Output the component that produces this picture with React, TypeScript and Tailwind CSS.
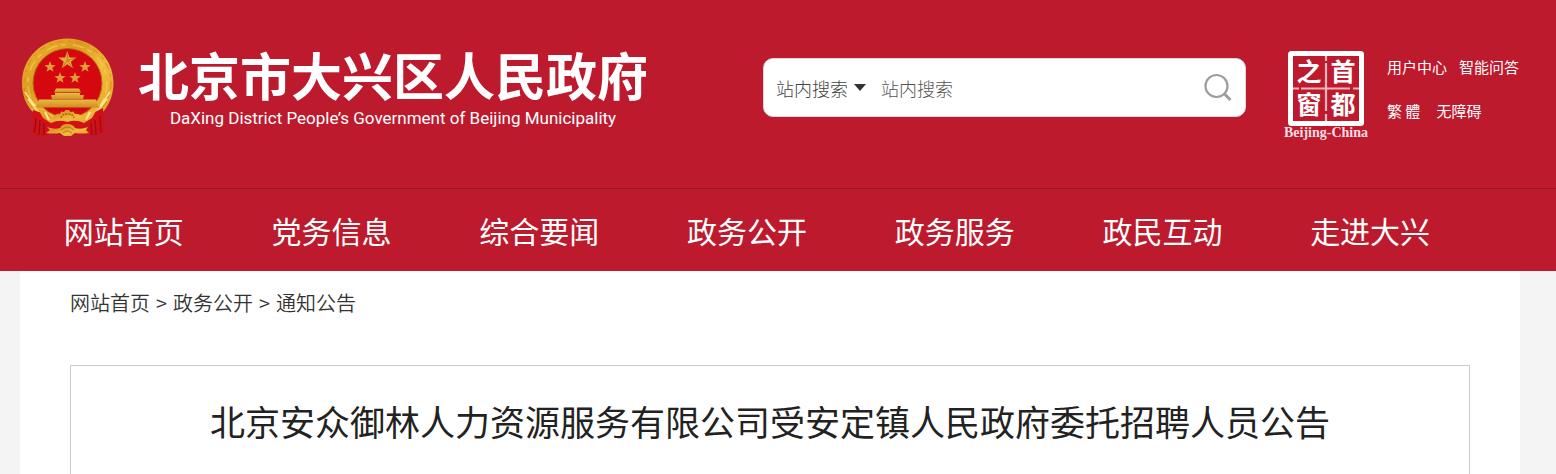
import { useState } from "react";

const NAV_ITEMS = [
  "网站首页",
  "党务信息",
  "综合要闻",
  "政务公开",
  "政务服务",
  "政民互动",
  "走进大兴",
];

const BREADCRUMBS = ["网站首页", "政务公开", "通知公告"];

const SMALL_STARS = [
  { x: 28, y: 29 },
  { x: 63, y: 29 },
  { x: 38, y: 40 },
  { x: 53, y: 40 },
];

function starPoints(cx: number, cy: number, r: number): string {
  const points: string[] = [];
  for (let i = 0; i < 10; i++) {
    const radius = i % 2 === 0 ? r : r * 0.4;
    const angle = (Math.PI / 5) * i - Math.PI / 2;
    points.push(
      `${(cx + radius * Math.cos(angle)).toFixed(2)},${(cy + radius * Math.sin(angle)).toFixed(2)}`,
    );
  }
  return points.join(" ");
}

function Emblem() {
  return (
    <svg viewBox="0 0 92 100" className="h-[100px] w-[92px] shrink-0" aria-hidden="true">
      <defs>
        <linearGradient id="gold" x1="0" y1="0" x2="1" y2="1">
          <stop offset="0" stopColor="#efb42e" />
          <stop offset="0.35" stopColor="#de9a22" />
          <stop offset="0.6" stopColor="#f0bb3c" />
          <stop offset="1" stopColor="#e3a026" />
        </linearGradient>
        <linearGradient id="gate" x1="0" y1="0" x2="0" y2="1">
          <stop offset="0" stopColor="#ecba44" />
          <stop offset="1" stopColor="#cf8c22" />
        </linearGradient>
      </defs>

      {/* wreath */}
      <path
        d="M45.5 0.5 C71 0.5 91.5 20 91.5 45 C91.5 57 87 68 80 75 L73 82 L60 86 H32 L18 82 L12 75 C4 68 0 57 0 45 C0 20 20 0.5 45.5 0.5 Z"
        fill="url(#gold)"
      />
      <ellipse
        cx="45.5"
        cy="45"
        rx="43.5"
        ry="42"
        fill="none"
        stroke="#cf8e1d"
        strokeWidth="1"
        strokeDasharray="7 5 3 4"
      />
      <ellipse
        cx="45.5"
        cy="45"
        rx="39.5"
        ry="38.5"
        fill="none"
        stroke="#f9d65d"
        strokeWidth="1.6"
        strokeDasharray="11 4 5 7"
        opacity="0.55"
      />
      <path
        d="M3 54 L13 68 M6 61 L18 76 M88 54 L78 68 M85 61 L73 76"
        stroke="#fbe694"
        strokeWidth="1.4"
      />
      <circle cx="45.5" cy="45" r="34.5" fill="#d6080f" stroke="#b56d16" strokeWidth="1" />

      {/* stars */}
      <polygon points={starPoints(45.3, 22.5, 9.5)} fill="#e5ac3c" />
      <path d="M45.3 13 V22.5 L54 20 M45.3 22.5 L51 30 M45.3 22.5 L40 30" stroke="#b46f1c" strokeWidth="0.8" fill="none" />
      {SMALL_STARS.map((star) => (
        <polygon key={`${star.x}-${star.y}`} points={starPoints(star.x, star.y, 6)} fill="#dfa03a" />
      ))}

      {/* gate */}
      <path d="M34 50.5 H57 L59 54.5 H32 Z" fill="url(#gate)" />
      <path d="M33 55 H58 V57 H62 L61 61.5 H30 L29 57 H33 Z" fill="url(#gate)" />
      <path d="M17 61.5 H74 L77 69.5 H14 Z" fill="url(#gate)" />
      <path d="M30 61.5 H61" stroke="#b9741d" strokeWidth="0.5" />

      {/* drapes */}
      <path
        d="M11 72 L20 75 L24 81 L36 83 L45.5 80 L55 83 L67 81 L71 75 L81 70 L82 94 Q76 98 70 97 L64 95 L45 98 L27 95 L22 98 Q17 99 10 96 Z"
        fill="#d30f17"
      />
      <path
        d="M14 80 L12.5 95 M18 82 L17 97 M22 85 V97 M69 85 L70 97 M73 82 L74 97 M78 78 L79 95"
        stroke="#8f1219"
        strokeWidth="1.4"
        fill="none"
      />
      <path
        d="M16 71 L24 73 L30 80 Q34 75 38 76 L39 73.5 L42 74 L43.5 72 H47 L48.5 74 L51.5 73.5 L53 76 Q57 75 61 80 L67 73 L75 71 L70 80 L62 85 Q54 81 45.5 84 Q37 81 29 85 L21 80 Z"
        fill="url(#gold)"
      />
      <path d="M23 74 L27 82 M68 74 L64 82" stroke="#fbe694" strokeWidth="2" />
      <path d="M39 80 Q40 76 45.3 76 Q51 76 52 80" fill="none" stroke="#a8641a" strokeWidth="1.4" strokeDasharray="2 1" />
      <path
        d="M25 89 Q32 92 38 90 Q40 86 45.5 86 Q51 86 53 90 Q59 92 66 89 L64 92 L67 95 Q59 96 53 95 L49 98 H42 L38 95 Q31 96 24 95 L28 92 Z"
        fill="url(#gold)"
      />
      <path d="M39 92 Q45.5 86 52 92 M41 95 Q45.5 91 50 95" stroke="#b9741d" strokeWidth="1" fill="none" />
    </svg>
  );
}

function CapitalWindowSeal() {
  return (
    <a href="#capital" className="flex w-[84px] shrink-0 flex-col items-center text-white">
      <svg viewBox="0 0 76 75" className="h-[75px] w-[76px]" aria-label="首都之窗">
        <rect x="2.5" y="2.5" width="71" height="70" rx="1" fill="none" stroke="#fff" strokeWidth="5" />
        <path d="M38 5 V10 M38 12 V60 M38 63 V70" stroke="#f0b5bb" strokeWidth="2.2" />
        <path d="M5 37.5 H11 M13 37.5 H62 M65 37.5 H71" stroke="#f0b5bb" strokeWidth="2.2" />
        <g
          fill="#fff"
          fontFamily="'Noto Sans CJK SC', sans-serif"
          fontWeight="700"
          fontSize="25"
          textAnchor="middle"
        >
          <text x="21" y="30">之</text>
          <text x="55" y="30">首</text>
          <text x="21" y="63">窗</text>
          <text x="55" y="63">都</text>
        </g>
      </svg>
      <span className="font-['Liberation_Serif',serif] text-sm leading-[14px] font-bold whitespace-nowrap text-[#f8dde0]">
        Beijing-China
      </span>
    </a>
  );
}

function SearchBox() {
  const [scope, setScope] = useState("site");
  const [keyword, setKeyword] = useState("");

  return (
    <form
      onSubmit={(e) => e.preventDefault()}
      className="flex h-[59px] w-[483px] items-center rounded-[10px] border border-[#d9d9d9] bg-white px-3 text-lg font-light"
    >
      <select
        aria-label="搜索范围"
        value={scope}
        onChange={(e) => setScope(e.target.value)}
        className="w-[78px] appearance-none text-[#444] outline-none"
      >
        <option value="site">站内搜索</option>
      </select>
      <svg viewBox="0 0 12 7" className="h-[7px] w-3 shrink-0" aria-hidden="true">
        <path d="M0 0 H12 L6 7 Z" fill="#333" />
      </svg>
      <input
        type="text"
        aria-label="关键词"
        value={keyword}
        onChange={(e) => setKeyword(e.target.value)}
        placeholder="站内搜索"
        className="ml-[15px] min-w-0 flex-1 text-[#333] outline-none placeholder:text-[#555]"
      />
      <button type="submit" aria-label="搜索" className="shrink-0">
        <svg viewBox="0 0 30 30" className="size-[30px]" fill="none" stroke="#9d9d9d" strokeWidth="2.2">
          <circle cx="13.5" cy="13" r="11" />
          <path d="M21 20.5 L27.5 27" strokeWidth="3" />
        </svg>
      </button>
    </form>
  );
}

export default function App() {
  return (
    <div className="min-h-screen bg-[#f4f4f4] font-['Noto_Sans_CJK_SC',sans-serif]">
      <header className="bg-[#bd1a2d] text-white">
        <div className="flex h-[188px] items-start justify-between pr-9 pl-[22px]">
          <a href="#home" className="flex pt-[38px]">
            <Emblem />
            <span className="ml-6 flex flex-col items-center">
              <span className="mt-2 text-[51px] leading-[56px] font-bold whitespace-nowrap">
                北京市大兴区人民政府
              </span>
              <span className="mt-1 font-[Roboto,sans-serif] text-[17px] leading-6 whitespace-nowrap">
                DaXing District People’s Government of Beijing Municipality
              </span>
            </span>
          </a>
          <div className="flex items-start">
            <div className="pt-[58px]">
              <SearchBox />
            </div>
            <div className="ml-[38px] pt-[51px]">
              <CapitalWindowSeal />
            </div>
            <div className="ml-[19px] flex w-[133px] flex-col gap-[22px] pt-14 text-[15px] leading-[22px] whitespace-nowrap">
              <div className="flex gap-3">
                <a href="#user">用户中心</a>
                <a href="#qa">智能问答</a>
              </div>
              <div className="flex gap-4">
                <a href="#traditional">繁 體</a>
                <a href="#accessible">无障碍</a>
              </div>
            </div>
          </div>
        </div>
        <nav className="grid h-[83px] grid-cols-7 items-center border-t border-[#8f1a20] pr-[82px] pl-5 text-center text-3xl">
          {NAV_ITEMS.map((item) => (
            <a key={item} href="#nav" className="whitespace-nowrap">
              {item}
            </a>
          ))}
        </nav>
      </header>

      <main className="pr-9 pl-5">
        <div className="min-h-[203px] bg-white px-[50px]">
          <ol className="flex pt-[17px] pb-[47px] text-xl leading-[30px] font-[350] text-[#333]">
            {BREADCRUMBS.map((crumb, index) => (
              <li key={crumb}>
                {index > 0 && <span className="mx-1.5">&gt;</span>}
                <a href="#crumb">{crumb}</a>
              </li>
            ))}
          </ol>
          <article className="border border-b-0 border-[#ccc] pt-[29px] pb-7">
            <h1 className="text-center text-[35px] leading-[51px] text-[#222]">
              北京安众御林人力资源服务有限公司受安定镇人民政府委托招聘人员公告
            </h1>
          </article>
        </div>
      </main>
    </div>
  );
}
